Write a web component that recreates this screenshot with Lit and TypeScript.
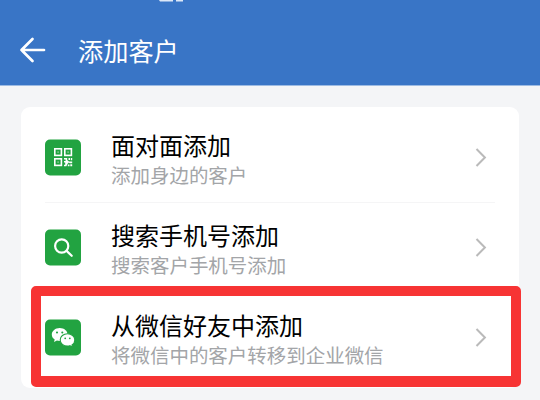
import { LitElement, html, css, svg } from "lit";
import { customElement, property } from "lit/decorators.js";

const icons = {
  qr: svg`
    <g fill="none" stroke="#fff" stroke-width="1.6">
      <rect x="9.8" y="9.8" width="6.6" height="6.6"/>
      <rect x="19.8" y="9.8" width="6.6" height="6.6"/>
      <rect x="9.8" y="19.8" width="6.6" height="6.6"/>
    </g>
    <g fill="#fff" fill-opacity=".4">
      <rect x="12.3" y="12.3" width="1.6" height="1.6"/>
      <rect x="22.3" y="12.3" width="1.6" height="1.6"/>
      <rect x="12.3" y="22.3" width="1.6" height="1.6"/>
    </g>
    <path fill="#fff" d="M19 19h3.200v2l1.800 1.600h3.200v1.700h-2.400l-1-.8-1.400 1.500-1 2.300H19v-1.600h1.200v-2.200H19v-1.600h1.600v-1.300H19zM23.500 19h1.500v2h-1.500zM25.800 19h1.400v2.300h-1.400zM22.800 25.500h1.700V27.300h-1.700zM25.300 25.300h1.900v2h-1.900z"/>`,
  search: svg`
    <g fill="none" stroke="#fff" stroke-width="2.200" stroke-linecap="round">
      <circle cx="16.700" cy="17" r="6.600"/>
      <path d="M21.600 21.900L26.700 26.800"/>
    </g>`,
  chat: svg`
    <path fill="#fff" d="M14.700 8.900c-4.400 0-7.900 2.900-7.900 6.600 0 2.100 1.100 3.900 2.900 5.100l-.7 2.400 2.900-1.500c.9.300 1.800.4 2.800.4 4.400 0 7.900-2.900 7.900-6.500s-3.500-6.500-7.900-6.500z"/>
    <path fill="#fff" stroke="#22a341" stroke-width="1.100" d="M22.500 14.700c-4 0-7.300 2.700-7.300 6.200s3.300 6.200 7.300 6.200c.9 0 1.700-.1 2.400-.4l2.700 1.500-.6-2.300c1.700-1.100 2.800-2.900 2.800-5 0-3.500-3.300-6.200-7.300-6.200z"/>
    <g fill="#22a341">
      <circle cx="12" cy="13.500" r="1.050"/><circle cx="17.300" cy="13.500" r="1.050"/>
      <circle cx="20.200" cy="19.300" r=".9"/><circle cx="24.800" cy="19.300" r=".9"/>
    </g>`,
};

@customElement("customer-option")
class CustomerOption extends LitElement {
  @property() icon: keyof typeof icons = "qr";
  @property() heading = "";
  @property() detail = "";

  static styles = css`
    :host { display: flex; align-items: center; height: 90px; box-sizing: border-box; padding: 0 32px 0 24px; }
    .tile { width: 36px; height: 37px; flex: none; }
    .text { margin-left: 30px; padding-top: 3px; flex: 1; white-space: nowrap; }
    .heading { font-size: 24px; line-height: 32px; color: #000; }
    .detail { font-size: 19.480px; line-height: 28px; color: #a3a5a8; }
    .chevron { width: 12px; height: 21px; flex: none; }
  `;

  render() {
    return html`
      <svg class="tile" viewBox="0 0 36 37">
        <rect y=".5" width="36" height="36" rx="5" fill="#22a341"/>
        ${icons[this.icon]}
      </svg>
      <div class="text">
        <div class="heading">${this.heading}</div>
        <div class="detail">${this.detail}</div>
      </div>
      <svg class="chevron" viewBox="0 0 12 21">
        <path d="M1.500 2L9.900 10.500L1.500 19" fill="none" stroke="#bababa" stroke-width="2"/>
      </svg>
    `;
  }
}

@customElement("app-root")
class AppRoot extends LitElement {
  static styles = css`
    :host {
      display: block; position: relative; width: 540px; height: 400px; overflow: hidden;
      background: #f4f5f7; font-family: "Noto Sans CJK SC", sans-serif;
    }
    .bar { position: relative; display: flex; align-items: center; height: 86px; padding: 14px 0 0 19px; box-sizing: border-box; background: #3975c6; border-bottom: 1px solid #9dbbe3; }
    .arrow { width: 28px; height: 28px; flex: none; }
    .title { margin-left: 31px; font-size: 25.200px; line-height: 36px; color: #fff; }
    .status { position: absolute; left: 159px; top: 0; width: 25px; height: 2px; }
    .card { margin: 21px 21px 0; height: 281px; padding-top: 5px; box-sizing: border-box; background: #fff; border-radius: 9px; }
    .line { height: 1px; margin: 0 24px -1px; background: #f5f5f6; }
    .frame { position: absolute; left: 31px; top: 286px; width: 490px; height: 101px; box-sizing: border-box; border: 10px solid #f73434; border-bottom-width: 11px; border-radius: 5px; }
  `;

  render() {
    return html`
      <div class="bar">
        <svg class="status" viewBox="0 0 25 2" fill="#dce8f8">
          <path d="M0 0H14V1.500H1zM17 0H24V1.500H17z"/>
        </svg>
        <svg class="arrow" viewBox="0 0 28 28">
          <path d="M13.500 3L2.500 14L13.500 25M2.500 14H25" fill="none" stroke="#fff" stroke-width="2.700" stroke-linecap="round" stroke-linejoin="round"/>
        </svg>
        <div class="title">添加客户</div>
      </div>
      <div class="card">
        <customer-option icon="qr" heading="面对面添加" detail="添加身边的客户"></customer-option>
        <div class="line"></div>
        <customer-option icon="search" heading="搜索手机号添加" detail="搜索客户手机号添加"></customer-option>
        <customer-option icon="chat" heading="从微信好友中添加" detail="将微信中的客户转移到企业微信"></customer-option>
      </div>
      <div class="frame"></div>
    `;
  }
}
